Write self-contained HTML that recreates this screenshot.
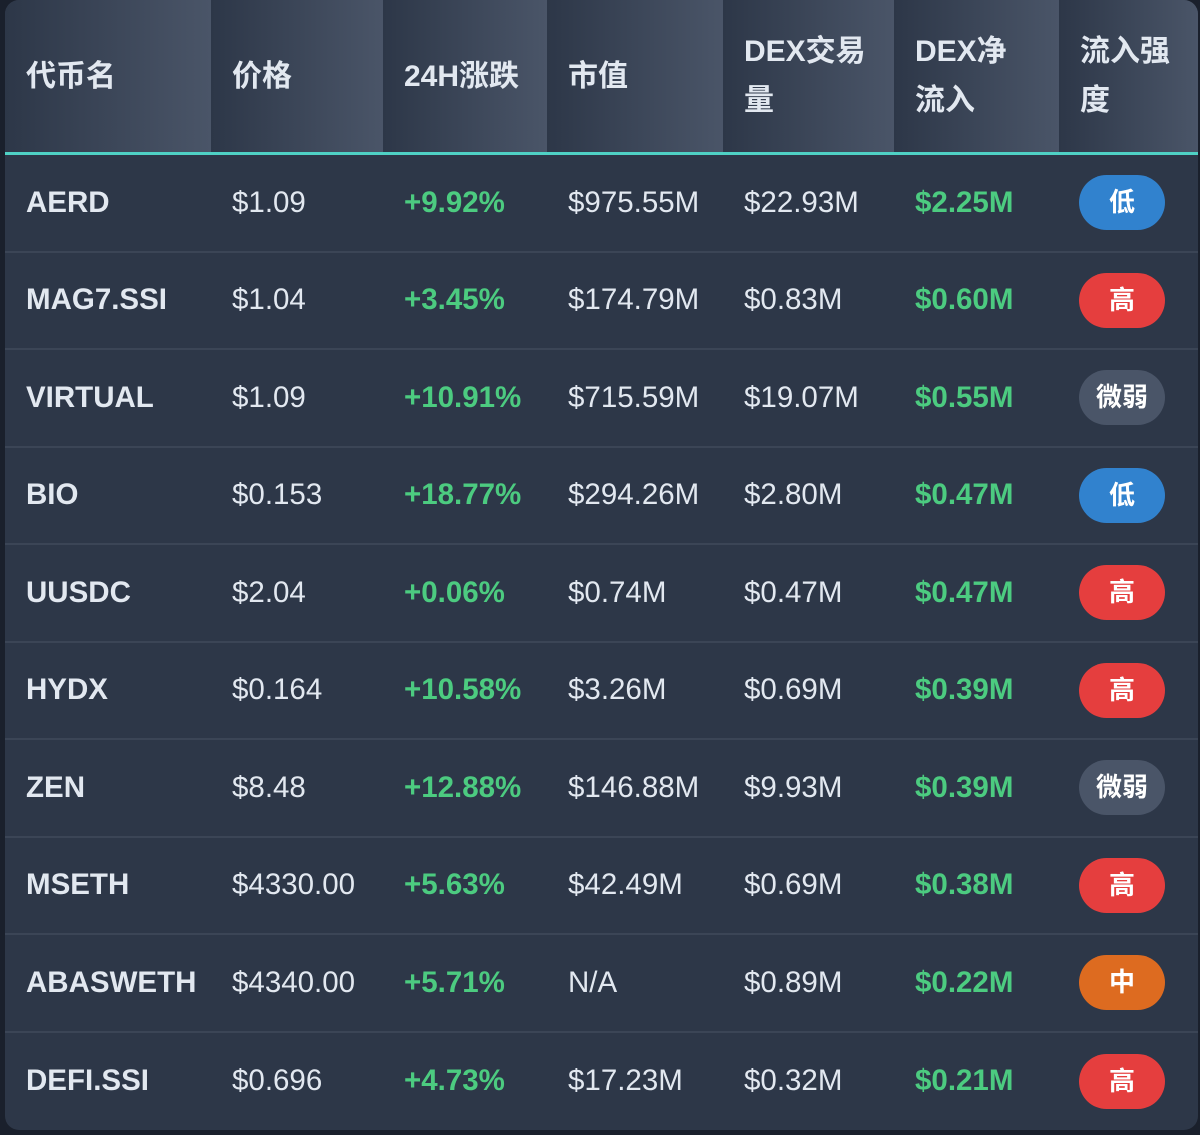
<!DOCTYPE html>
<html><head><meta charset="utf-8"><style>
html,body{margin:0;padding:0;background:#1a202c;width:1200px;height:1135px;overflow:hidden}
table{position:absolute;left:5px;top:0;width:1193px;border-collapse:separate;border-spacing:0;background:#2d3748;border-radius:14px;overflow:hidden;font-family:"Liberation Sans","Noto Sans CJK SC",sans-serif;color:#e2e8f0;font-size:29.5px;table-layout:fixed}
th{height:155px;text-align:left;padding:0 24px 0 21px;font-weight:bold;font-size:30px;line-height:49px;background:linear-gradient(90deg,#2d3748,#4a5568);border-bottom:3px solid #4fd1c5;box-sizing:border-box;vertical-align:middle}
td{height:97.5px;padding:0 0 0 21px;border-bottom:2px solid #3b4556;box-sizing:border-box;white-space:nowrap}
tr:last-child td{border-bottom:none}
td:first-child{font-weight:bold}
.g{color:#4ccb80;font-weight:bold}
.b{display:inline-block;width:86px;height:55px;line-height:55px;border-radius:28px;text-align:center;color:#fff;font-weight:bold;font-size:26px;margin-left:-1px}
.lo{background:#3182ce}.hi{background:#e53e3e}.wk{background:#4a5568}.md{background:#dd6b20}
</style></head><body>
<table>
<colgroup><col style="width:206px"><col style="width:172px"><col style="width:164px"><col style="width:176px"><col style="width:171px"><col style="width:165px"><col style="width:139px"></colgroup>
<tr><th>代币名</th><th>价格</th><th>24H涨跌</th><th>市值</th><th>DEX交易<br>量</th><th>DEX净<br>流入</th><th>流入强<br>度</th></tr>
<tr><td>AERD</td><td>$1.09</td><td class="g">+9.92%</td><td>$975.55M</td><td>$22.93M</td><td class="g">$2.25M</td><td><span class="b lo">低</span></td></tr>
<tr><td>MAG7.SSI</td><td>$1.04</td><td class="g">+3.45%</td><td>$174.79M</td><td>$0.83M</td><td class="g">$0.60M</td><td><span class="b hi">高</span></td></tr>
<tr><td>VIRTUAL</td><td>$1.09</td><td class="g">+10.91%</td><td>$715.59M</td><td>$19.07M</td><td class="g">$0.55M</td><td><span class="b wk">微弱</span></td></tr>
<tr><td>BIO</td><td>$0.153</td><td class="g">+18.77%</td><td>$294.26M</td><td>$2.80M</td><td class="g">$0.47M</td><td><span class="b lo">低</span></td></tr>
<tr><td>UUSDC</td><td>$2.04</td><td class="g">+0.06%</td><td>$0.74M</td><td>$0.47M</td><td class="g">$0.47M</td><td><span class="b hi">高</span></td></tr>
<tr><td>HYDX</td><td>$0.164</td><td class="g">+10.58%</td><td>$3.26M</td><td>$0.69M</td><td class="g">$0.39M</td><td><span class="b hi">高</span></td></tr>
<tr><td>ZEN</td><td>$8.48</td><td class="g">+12.88%</td><td>$146.88M</td><td>$9.93M</td><td class="g">$0.39M</td><td><span class="b wk">微弱</span></td></tr>
<tr><td>MSETH</td><td>$4330.00</td><td class="g">+5.63%</td><td>$42.49M</td><td>$0.69M</td><td class="g">$0.38M</td><td><span class="b hi">高</span></td></tr>
<tr><td>ABASWETH</td><td>$4340.00</td><td class="g">+5.71%</td><td>N/A</td><td>$0.89M</td><td class="g">$0.22M</td><td><span class="b md">中</span></td></tr>
<tr><td>DEFI.SSI</td><td>$0.696</td><td class="g">+4.73%</td><td>$17.23M</td><td>$0.32M</td><td class="g">$0.21M</td><td><span class="b hi">高</span></td></tr>
</table>
</body></html>
